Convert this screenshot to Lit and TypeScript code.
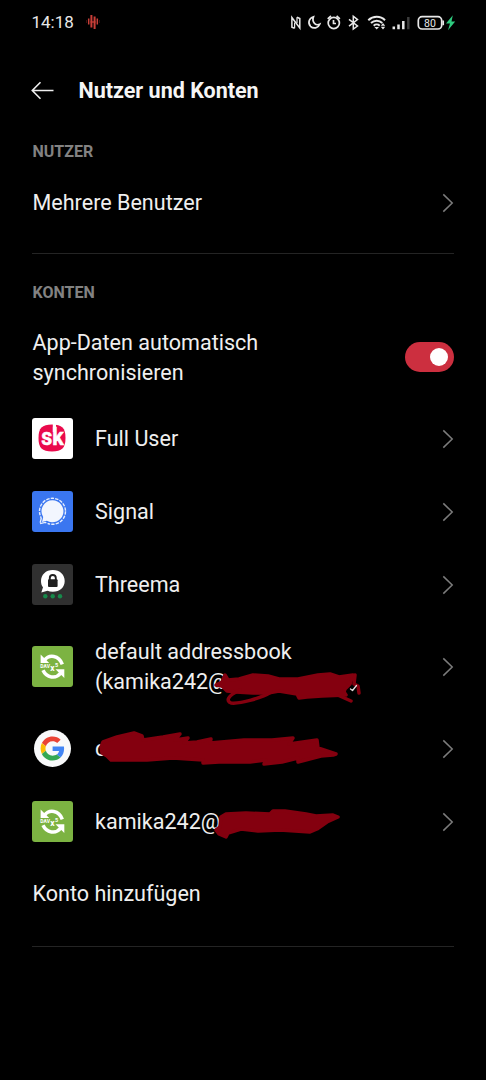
import { LitElement, html, svg, css, nothing } from "lit";
import { customElement, property, state } from "lit/decorators.js";

const chevron = html`<svg class="chevron" width="12" height="20" viewBox="0 0 12 20">
  <path d="M1.300 1.400 10.200 10 1.300 18.600" fill="none" stroke="#7c7c7c" stroke-width="1.500" />
</svg>`;

const sk = html`<svg width="41" height="41" viewBox="0 0 41 41">
  <rect width="41" height="41" rx="3" fill="#fff" />
  <path d="M20 6.500C30 6.500 33.500 10 33.500 20S30 33.500 20 33.500 6.500 30 6.500 20 10 6.500 20 6.500Z" fill="#ea0a4c" />
  <text x="9.300" y="26.600" font-size="23" font-weight="700" fill="#fff" stroke="#fff" stroke-width=".5" textLength="22.500" lengthAdjust="spacingAndGlyphs">sk</text>
  <path d="M22.400 6V14" stroke="#fff" stroke-width="3.200" />
</svg>`;

const signal = html`<svg width="41" height="41" viewBox="0 0 41 41">
  <rect width="41" height="41" rx="3" fill="#3a76f0" />
  <circle cx="20.500" cy="20.300" r="13" fill="none" stroke="#e8effd" stroke-width="1.400" stroke-dasharray="3.400 1.140" />
  <path d="M6 24.500 9.500 24.500 16 31 15 34.500 6 34.500Z" fill="#3a76f0" />
  <path d="M8.600 25.400 9.200 27.600 8 32.600 13.200 31.400 15.300 32.300" fill="none" stroke="#e8effd" stroke-width="1.400" stroke-dasharray="6.500 1" />
  <path d="M20.500 9.300a11 11 0 1 1-5.600 20.500L10 31l1.200-4.900A11 11 0 0 1 20.500 9.300Z" fill="#f2f6fe" />
</svg>`;

const threema = html`<svg width="41" height="41" viewBox="0 0 41 41">
  <rect width="41" height="41" rx="3" fill="#303030" />
  <path d="M20.800 6C28 6 32.700 10.800 32.700 17S28 27.800 20.800 27.800C18.800 27.800 17 27.500 15.500 26.800L9.300 28.500 11 23.300C9.600 21.500 9 19.500 9 17 9 10.800 13.800 6 20.800 6Z" fill="#fff" />
  <rect x="16" y="15.300" width="9.600" height="7.700" rx="1" fill="#202020" />
  <path d="M17.800 16.500V14a3 3 0 0 1 6 0v2.500" fill="none" stroke="#202020" stroke-width="1.900" />
  <g fill="#178a4b"><circle cx="13.300" cy="32.200" r="2.200" /><circle cx="20.700" cy="32.200" r="2.200" /><circle cx="28" cy="32.200" r="2.200" /></g>
</svg>`;

const davx = html`<svg width="41" height="41" viewBox="0 0 41 41">
  <rect width="41" height="41" rx="3" fill="#7cb342" />
  <path d="M12.500 14.200C17 8 27 9 30.300 18.300" fill="none" stroke="#fff" stroke-width="3.500" />
  <path d="M8.600 8.500V17H17.200Z" fill="#fff" />
  <path d="M28.500 27.300C24 33.200 14.500 32 11 24.300" fill="none" stroke="#fff" stroke-width="3.500" />
  <path d="M32.300 23.300V32L23.500 23.300Z" fill="#fff" />
  <text x="8.300" y="22.400" font-size="5.700" font-weight="700" fill="#fff" textLength="9.600" lengthAdjust="spacingAndGlyphs">DAV</text>
  <text x="18.300" y="24.800" font-size="8.500" font-weight="700" fill="#fff">x</text>
  <text x="23" y="20.800" font-size="5.500" font-weight="700" fill="#fff">5</text>
</svg>`;

const google = html`<svg width="41" height="41" viewBox="0 0 41 41">
  <circle cx="20.500" cy="20.500" r="18.500" fill="#f8f9fa" />
  <g transform="translate(8.600 8.500) scale(.5)">
    <path fill="#EA4335" d="M24 9.500c3.540 0 6.710 1.220 9.210 3.600l6.850-6.850C35.900 2.380 30.470 0 24 0 14.620 0 6.510 5.380 2.560 13.220l7.980 6.190C12.430 13.720 17.740 9.500 24 9.500z" />
    <path fill="#4285F4" d="M46.980 24.550c0-1.570-.15-3.090-.38-4.550H24v9.020h12.940c-.58 2.960-2.260 5.480-4.780 7.180l7.730 6c4.510-4.180 7.090-10.360 7.090-17.650z" />
    <path fill="#FBBC05" d="M10.530 28.590c-.48-1.450-.76-2.990-.76-4.590s.27-3.140.76-4.590l-7.980-6.190C.92 16.460 0 20.120 0 24c0 3.880.92 7.540 2.560 10.780l7.970-6.190z" />
    <path fill="#34A853" d="M24 48c6.480 0 11.930-2.130 15.890-5.810l-7.730-6c-2.150 1.450-4.920 2.300-8.160 2.300-6.260 0-11.570-4.220-13.470-9.910l-7.980 6.190C6.510 42.620 14.620 48 24 48z" />
  </g>
</svg>`;

interface Account {
  icon: unknown;
  lines: string[];
  mark?: { box: string; shapes: unknown };
}

const accounts: Account[] = [
  { icon: sk, lines: ["Full User"] },
  { icon: signal, lines: ["Signal"] },
  { icon: threema, lines: ["Threema"] },
  {
    icon: davx,
    lines: ["default addressbook", "(kamika242@"],
    mark: {
      box: "0 621 486 91",
      shapes: svg`
        <path d="M216 685 222 682 225 675 228 680 239 679 253 675 268 676 279 679 298 679 318 675 330 674 339 677 353 675 350 684 345 689 344 692 346 695 322 696 307 697 299 698 297 694 279 691 268 693 253 693 236 692 227 691 222 686Z" />
        <path class="stroke" d="M240 690C227 696 226 701 231 703 240 704 262 698 271 692M331 692 351 701M346 681 350 683M355 675 354 684 358 686 359 693" />
        <path class="glimpse" d="M350.500 689 352.500 690.500 356.500 685.500" />`,
    },
  },
  {
    icon: google,
    lines: ["c"],
    mark: {
      box: "0 712 486 73",
      shapes: svg`<path d="M101 747 103 742 117 737 134 733 142 736 143 740 163 737 180 734 175 740 188 738 184 743 197 742 211 739 210 743 244 740 272 740 293 738 289 744 317 740 318 748 336 754 333 755 321 756 298 762 298 758 282 762 264 764 266 760 250 762 219 762 203 763 203 760 173 758 147 760 111 760 107 756 102 753Z" />`,
    },
  },
  {
    icon: davx,
    lines: ["kamika242@"],
    mark: {
      box: "0 785 486 73",
      shapes: svg`<path d="M221 817 226 814 246 813 270 814 273 811 285 811 306 814 316 816 333 815 338 817 327 822 317 829 310 832 295 831 280 830 258 831 241 829 228 833 226 837 219 834 216 830 220 827Z" />`,
    },
  },
];

@customElement("status-bar")
export class StatusBar extends LitElement {
  static styles = css`
    :host { display: flex; height: 43px; padding: 0 30px 0 31.500px; justify-content: space-between; align-items: center; }
    .left { display: flex; align-items: center; gap: 11px; }
    .time { font-size: 17px; letter-spacing: 0; line-height: 20px; color: #e8e8e8; }
    svg { display: block; }
  `;
  render() {
    return html`
      <div class="left">
        <span class="time">14:18</span>
        <svg width="16" height="18" viewBox="0 0 16 18" fill="none" stroke="#c93e38">
          <path d="M6.400 2V14.500M9.600 3.500V16" stroke-width="2" />
          <path d="M3.700 5.500V11.500M12.300 5.500V11.500" stroke-width="1.500" />
          <path d="M1.500 7V10M14.500 7V10" stroke-width=".7" opacity=".4" />
          <path d="M5.500 9H10.500" stroke-width="1.300" />
        </svg>
      </div>
      <svg width="167" height="22" viewBox="289 10 167 22" fill="none" stroke="#e8e8e8" stroke-width="1.700">
        <path d="M294.600 27.300 291.900 26.200V16.500L299.800 27V17.500L297 16.300" stroke-width="1.500" />
        <path d="M294.600 27.300V21.500M297 16.300V22" stroke-width="1.200" />
        <path d="M313.500 15.800C309 17 307.500 22 310.500 25.300 313.500 28.300 318.300 27 319.700 23.200 316 25 311.500 21.500 313.500 15.800Z" />
        <circle cx="333.800" cy="22" r="5.600" />
        <path d="M333.500 19V22.500H336M327.700 17.800 331 15M339.900 17.800 336.600 15" />
        <path d="M349 18.300 357.500 25 353.300 28V15.200L357.500 18.600 349 25.200" stroke-width="1.500" />
        <path d="M368.300 19.200C373 14.700 380.500 14.700 385 19.200M371 22C374.300 18.900 379.200 18.900 382.300 22M373.700 24.700C375.300 23.200 378.100 23.200 379.700 24.700" stroke-width="2" />
        <path d="M376.700 28.600 374.400 26H379Z" fill="#e8e8e8" stroke="none" />
        <path d="M380.800 24.700 383 22 385.200 24.700ZM380.800 25.800 383 28.500 385.200 25.800Z" fill="#e8e8e8" stroke="none" />
        <path d="M393.800 25.500V28.300M398.500 23.500V28.300M403.300 20V28.300" stroke-width="2.500" />
        <path d="M408.300 16V28.300" stroke="#3d3d3d" stroke-width="2.500" />
        <rect x="418.300" y="15.700" width="23.400" height="12.300" rx="3.800" />
        <path d="M443.200 19.500V24.200" stroke-width="1.700" />
        <text x="424" y="25.500" font-size="10.500" fill="#e8e8e8" stroke="none">80</text>
        <path d="M452.800 14.300 446 22.500H450L448 29.300 455.200 20.500H451.500Z" fill="#2ecb7f" stroke="none" />
      </svg>`;
  }
}

@customElement("toggle-switch")
export class ToggleSwitch extends LitElement {
  @property({ type: Boolean, reflect: true }) checked = false;
  static styles = css`
    :host { display: block; }
    .track { box-sizing: border-box; display: flex; align-items: center; width: 49px; height: 30px; padding: 0 6px; border: 0; border-radius: 15px; background: #444; }
    .on { background: #cc2f3f; justify-content: flex-end; }
    .knob { width: 18px; height: 18px; border-radius: 50%; background: #fff; }
  `;
  render() {
    return html`<button class="track ${this.checked ? "on" : ""}" role="switch" aria-checked=${this.checked}
      @click=${() => this.dispatchEvent(new CustomEvent("toggle"))}><span class="knob"></span></button>`;
  }
}

@customElement("app-root")
export class AppRoot extends LitElement {
  @state() private sync = true;
  static styles = css`
    :host { display: block; min-height: 100vh; background: #000; color: #efefef; font-family: Roboto, sans-serif; }
    svg { display: block; flex: none; }
    header { display: flex; align-items: center; height: 94px; padding-left: 31px; gap: 24.500px; }
    h1 { margin: 0; padding-top: 2px; font-size: 21.500px; font-weight: 700; color: #f5f5f5; line-height: 28px; }
    h2 { margin: 0; padding-left: 32.500px; height: 30px; font-size: 16px; line-height: 30px; font-weight: 700; color: #828282; }
    .row { position: relative; box-sizing: border-box; display: flex; align-items: center; height: 73px; padding: 0 32px 0 32px; font-size: 21.550px; line-height: 29.600px; }
    .row.double { height: 91px; }
    .row.sync { height: 91px; margin-top: 3px; }
    .row.sync .label { padding-top: 2px; }
    .row.single { height: 72px; }
    .label { flex: 1; padding-left: .5px; }
    .row.account { gap: 22px; }
    .row.account .label { padding-left: 0; }
    .line { display: block; white-space: nowrap; }
    .mark { position: absolute; left: 0; top: 0; width: 100%; height: 100%; fill: #84000f; stroke: #84000f; stroke-width: 3.500px; stroke-linejoin: round; stroke-linecap: round; }
    .mark .stroke { fill: none; }
    .mark .glimpse { fill: none; stroke: #e6dcdc; stroke-width: 1.300px; }
    .divider { height: 1px; margin: 0 32px; background: #242424; }
    .users { padding-bottom: 14px; }
    .accounts { padding: 24px 0 16px; }
  `;
  render() {
    return html`
      <status-bar></status-bar>
      <header>
        <svg width="23" height="20" viewBox="0 0 23 20"><path d="M22.500 10.500H1.500M9.500 2.200 1.300 10.500 9.500 18.800" fill="none" stroke="#eee" stroke-width="1.600" /></svg>
        <h1>Nutzer und Konten</h1>
      </header>
      <section class="users">
        <h2>NUTZER</h2>
        <div class="row single"><span class="label">Mehrere Benutzer</span>${chevron}</div>
      </section>
      <div class="divider"></div>
      <section class="accounts">
        <h2>KONTEN</h2>
        <div class="row sync">
          <span class="label"><span class="line">App-Daten automatisch</span><span class="line">synchronisieren</span></span>
          <toggle-switch .checked=${this.sync} @toggle=${() => (this.sync = !this.sync)}></toggle-switch>
        </div>
        ${accounts.map(
          (a) => html`<div class="row account ${a.lines.length > 1 ? "double" : ""}">
            ${a.icon}
            <span class="label">${a.lines.map((l) => html`<span class="line">${l}</span>`)}</span>
            ${chevron}
            ${a.mark ? html`<svg class="mark" viewBox=${a.mark.box}>${a.mark.shapes}</svg>` : nothing}
          </div>`
        )}
        <div class="row single"><span class="label">Konto hinzufügen</span></div>
      </section>
      <div class="divider"></div>`;
  }
}
